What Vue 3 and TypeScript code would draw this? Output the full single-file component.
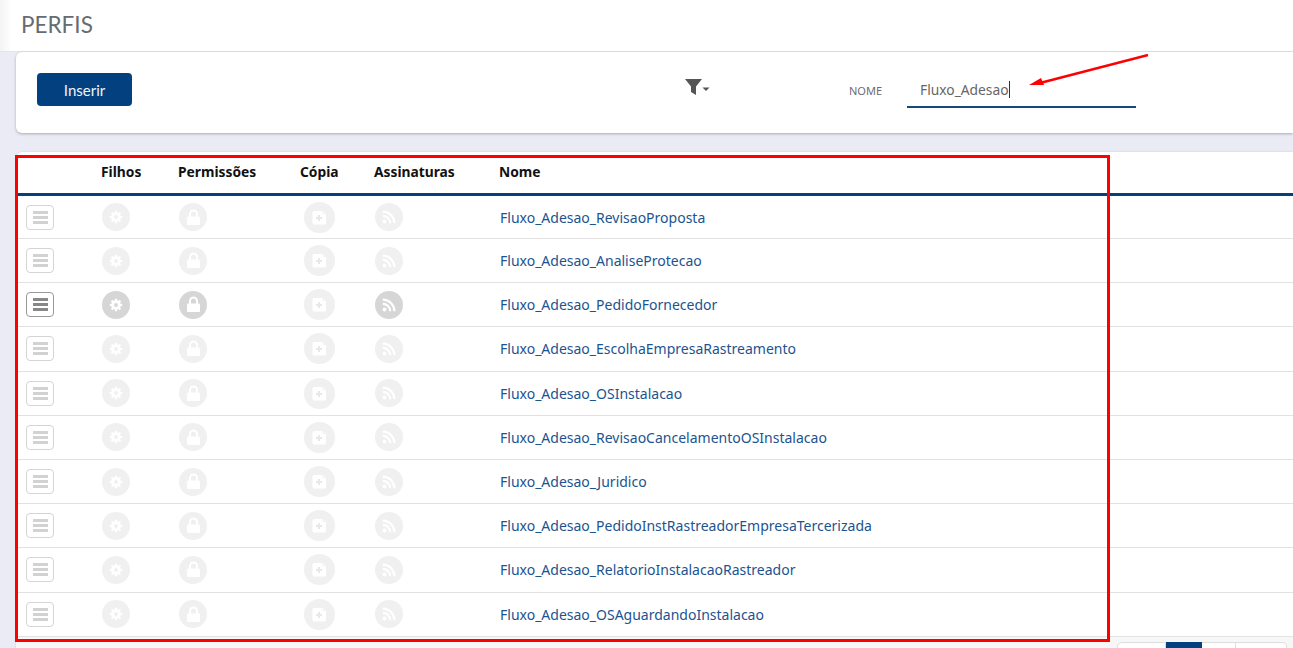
<script setup lang="ts">
const rows: string[] = [
  'Fluxo_Adesao_RevisaoProposta',
  'Fluxo_Adesao_AnaliseProtecao',
  'Fluxo_Adesao_PedidoFornecedor',
  'Fluxo_Adesao_EscolhaEmpresaRastreamento',
  'Fluxo_Adesao_OSInstalacao',
  'Fluxo_Adesao_RevisaoCancelamentoOSInstalacao',
  'Fluxo_Adesao_Juridico',
  'Fluxo_Adesao_PedidoInstRastreadorEmpresaTercerizada',
  'Fluxo_Adesao_RelatorioInstalacaoRastreador',
  'Fluxo_Adesao_OSAguardandoInstalacao'
]
const teeth: number[] = [0, 45, 90, 135, 180, 225, 270, 315]
</script>

<template>
  <div class="page">
    <header class="title-bar"><h1>PERFIS</h1></header>

    <section class="toolbar">
      <button class="insert" type="button">Inserir</button>
      <div class="filter">
        <svg width="26" height="18" viewBox="0 0 26 18">
          <path d="M0 1h17L11 8.500V17l-5-3V8.500z" fill="#555" />
          <path d="M17.500 9.500h7l-3.500 3.500z" fill="#555" />
        </svg>
      </div>
      <span class="label">NOME</span>
      <div class="field"><span class="value">Fluxo_Adesao</span><i class="caret"></i></div>
    </section>

    <section class="table-card">
      <div class="row head">
        <div>&nbsp;</div>
        <div>Filhos</div>
        <div>Permissões</div>
        <div>Cópia</div>
        <div>Assinaturas</div>
        <div>Nome</div>
      </div>
      <div v-for="(name, i) in rows" :key="name" class="row body" :class="{ active: i === 2 }">
        <div class="cell">
          <span class="menu"><b></b><b></b><b></b></span>
        </div>
        <div class="cell c-gear">
          <span class="circle">
            <svg width="14" height="14" viewBox="-7 -7 14 14">
              <rect v-for="t in teeth" :key="t" x="-1.200" y="-6.200" width="2.400" height="3" fill="#fff" :transform="`rotate(${t})`" />
              <circle r="3.300" fill="none" stroke="#fff" stroke-width="2.800" />
            </svg>
          </span>
        </div>
        <div class="cell c-perm">
          <span class="circle">
            <svg width="15" height="17" viewBox="0 0 15 17">
              <path d="M4 8V5a3.500 3.500 0 0 1 7 0v3" fill="none" stroke="#fff" stroke-width="2" />
              <rect x="1" y="7.500" width="13" height="8.500" rx="1" fill="#fff" />
            </svg>
          </span>
        </div>
        <div class="cell c-copy">
          <span class="circle big">
            <svg width="15" height="15" viewBox="0 0 15 15">
              <path d="M2 1h8.500L11 4h3v9a1.500 1.500 0 0 1-1.500 1.500h-10.500A1.500 1.500 0 0 1 .5 13V2.500A1.500 1.500 0 0 1 2 1z" fill="#fff" />
              <path d="M11.800 1 14 3.200h-2.200z" fill="#fff" opacity=".6" />
              <path d="M7 5v6M4 8h6" stroke="#e8e8e8" stroke-width="2" shape-rendering="crispEdges" />
            </svg>
          </span>
        </div>
        <div class="cell c-rss">
          <span class="circle">
            <svg width="14" height="14" viewBox="0 0 14 14">
              <circle cx="2.500" cy="11.500" r="1.900" fill="#fff" />
              <path d="M.8 5.800a7.400 7.400 0 0 1 7.400 7.400M.8 1.600a11.600 11.600 0 0 1 11.600 11.600" fill="none" stroke="#fff" stroke-width="2.200" />
            </svg>
          </span>
        </div>
        <div class="cell c-name"><a>{{ name }}</a></div>
      </div>

      <footer class="foot">
        <div class="pager">
          <span class="p first"></span>
          <span class="p current"></span>
          <span class="p"></span>
          <span class="p last"></span>
        </div>
      </footer>
    </section>

    <div class="highlight"></div>
    <svg class="arrow" width="130" height="40" viewBox="0 0 130 40">
      <path d="M128 1 20 29" stroke="#f00" stroke-width="2.500" fill="none" />
      <path d="M9 31 21 24 24 31z" fill="#f00" />
    </svg>
  </div>
</template>

<style>
html, body { margin: 0; height: 648px; overflow: hidden; background: #ebebf6; }
</style>

<style scoped>
.page {
  position: relative;
  width: 1293px;
  height: 648px;
  overflow: hidden;
  background: #ebebf6;
  font-family: "Noto Sans", sans-serif;
}
.title-bar {
  height: 52px;
  box-sizing: border-box;
  padding: 11px 0 0 21px;
  background: linear-gradient(90deg, #f4f4f4 0, #fff 12px);
  border-bottom: 1px solid #e4e4e4;
}
h1 {
  margin: 0;
  font: 400 22.500px/28px Lato, sans-serif;
  color: #666c72;
}
.toolbar {
  display: flex;
  align-items: flex-start;
  height: 81px;
  box-sizing: border-box;
  margin-left: 16px;
  padding-top: 21px;
  background: #fff;
  border-radius: 6px 0 0 6px;
  box-shadow: 0 1px 3px rgba(0, 0, 0, .28);
}
.insert {
  width: 95px;
  height: 33px;
  margin-left: 21px;
  padding: 0;
  border: 0;
  border-radius: 4px;
  background: #03407f;
  color: #f0f4f8;
  font: 400 15px Lato, sans-serif;
}
.filter { margin-left: 553px; padding-top: 5px; line-height: 0; }
.label {
  margin-left: 138px;
  padding-top: 11px;
  font: 400 11px/14px "Noto Sans", sans-serif;
  color: #6b6b75;
}
.field {
  display: flex;
  align-items: center;
  width: 229px;
  height: 35px;
  box-sizing: border-box;
  margin-left: 25px;
  padding: 0 0 1px 13px;
  border-bottom: 2px solid #17497f;
  color: #666;
  font-size: 13.800px;
}
.caret { width: 1px; height: 17px; background: #333; }
.table-card {
  margin: 19px 0 0 16px;
  background: #fff;
  border-radius: 6px 0 0 0;
  box-shadow: 0 0 2px rgba(0, 0, 0, .15);
}
.row {
  display: grid;
  grid-template-columns: 85px 77px 122px 74px 125px 1fr;
  box-sizing: border-box;
}
.head {
  height: 44px;
  padding-top: 10px;
  border-bottom: 3.500px solid #03407f;
  font-size: 13.800px;
  line-height: 19px;
  font-weight: 700;
  color: #111;
}
.body {
  height: 44.200px;
  border-bottom: 1px solid #e2e2e2;
  align-items: center;
}
.head + .body { height: 43px; }
.cell { display: flex; align-items: center; }
.c-perm, .c-rss, .c-name, .c-gear { padding-left: 1px; }
.c-gear { padding-left: .5px; }
.c-copy { padding-left: 4px; }
.menu {
  display: flex;
  flex-direction: column;
  justify-content: center;
  gap: 2px;
  width: 28px;
  height: 25px;
  box-sizing: border-box;
  margin-left: 10px;
  border: 1px solid #d4d4d4;
  border-radius: 4px;
  background: #fff;
  align-items: center;
}
.menu b { display: block; width: 15px; height: 3px; background: #d2d2d2; }
.active .menu { border-color: #999; }
.active .menu b { background: #888; }
.circle {
  display: flex;
  align-items: center;
  justify-content: center;
  width: 28px;
  height: 28px;
  border-radius: 50%;
  background: #f0f0f0;
}
.circle.big { width: 31px; height: 31px; }
.active .circle:not(.big) { background: #d6d6d6; }
a {
  color: #1c5390;
  font-size: 14px;
  text-decoration: none;
}
.foot {
  display: flex;
  justify-content: flex-end;
  height: 40px;
  box-sizing: border-box;
  padding: 5px 6px 0 0;
  background: #f7f7f7;
}
.pager { display: flex; height: 30px; }
.p {
  width: 34px;
  box-sizing: border-box;
  background: #fff;
  border: 1px solid #ddd;
  border-left: 0;
}
.first { width: 49px; border-left: 1px solid #ddd; border-radius: 5px 0 0 0; }
.current { width: 36px; background: #03407f; border-color: #03407f; }
.last { width: 51px; border-radius: 0 5px 0 0; }
.highlight {
  position: absolute;
  left: 15px;
  top: 155px;
  width: 1095px;
  height: 487px;
  box-sizing: border-box;
  border: 3px solid #f00;
  pointer-events: none;
}
.arrow { position: absolute; left: 1020px; top: 54px; }
</style>
